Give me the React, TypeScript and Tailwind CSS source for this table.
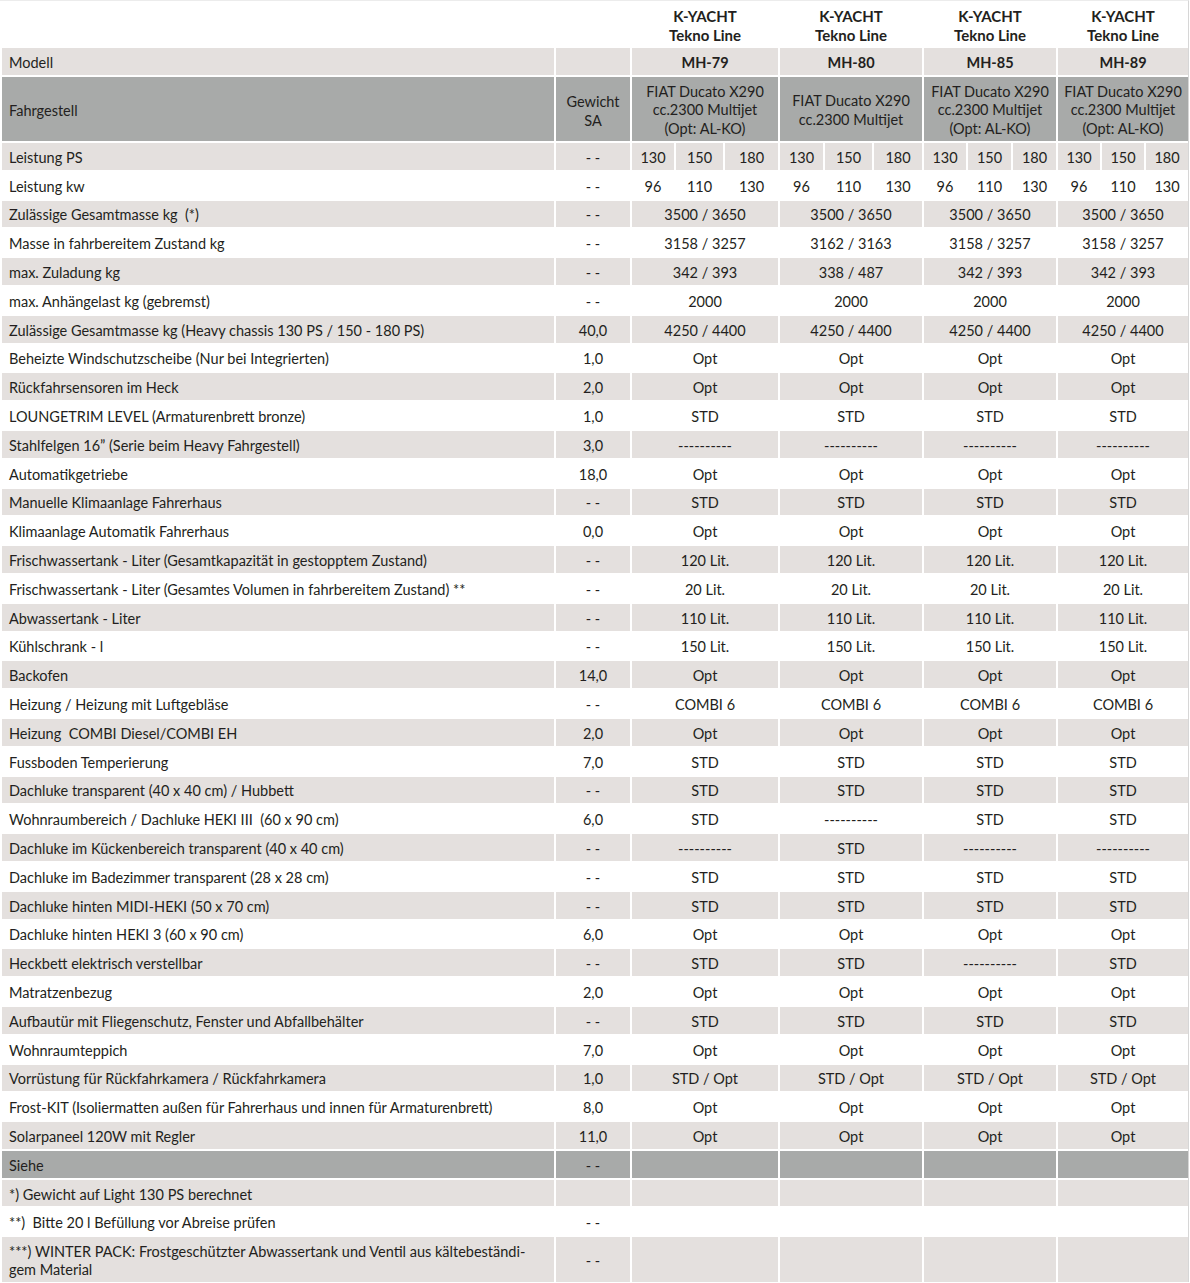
import React from "react";

type Row = { label: string; sa: string; vals: string[]; tone: "light" | "white" };

const raw: [string, string, string[]][] = [
  ["Zulässige Gesamtmasse kg  (*)", "- -", ["3500 / 3650", "3500 / 3650", "3500 / 3650", "3500 / 3650"]],
  ["Masse in fahrbereitem Zustand kg", "- -", ["3158 / 3257", "3162 / 3163", "3158 / 3257", "3158 / 3257"]],
  ["max. Zuladung kg", "- -", ["342 / 393", "338 / 487", "342 / 393", "342 / 393"]],
  ["max. Anhängelast kg (gebremst)", "- -", ["2000", "2000", "2000", "2000"]],
  ["Zulässige Gesamtmasse kg (Heavy chassis 130 PS / 150 - 180 PS)", "40,0", ["4250 / 4400", "4250 / 4400", "4250 / 4400", "4250 / 4400"]],
  ["Beheizte Windschutzscheibe (Nur bei Integrierten)", "1,0", ["Opt", "Opt", "Opt", "Opt"]],
  ["Rückfahrsensoren im Heck", "2,0", ["Opt", "Opt", "Opt", "Opt"]],
  ["LOUNGETRIM LEVEL (Armaturenbrett bronze)", "1,0", ["STD", "STD", "STD", "STD"]],
  ["Stahlfelgen 16” (Serie beim Heavy Fahrgestell)", "3,0", ["----------", "----------", "----------", "----------"]],
  ["Automatikgetriebe", "18,0", ["Opt", "Opt", "Opt", "Opt"]],
  ["Manuelle Klimaanlage Fahrerhaus", "- -", ["STD", "STD", "STD", "STD"]],
  ["Klimaanlage Automatik Fahrerhaus", "0,0", ["Opt", "Opt", "Opt", "Opt"]],
  ["Frischwassertank - Liter (Gesamtkapazität in gestopptem Zustand)", "- -", ["120 Lit.", "120 Lit.", "120 Lit.", "120 Lit."]],
  ["Frischwassertank - Liter (Gesamtes Volumen in fahrbereitem Zustand) **", "- -", ["20 Lit.", "20 Lit.", "20 Lit.", "20 Lit."]],
  ["Abwassertank - Liter", "- -", ["110 Lit.", "110 Lit.", "110 Lit.", "110 Lit."]],
  ["Kühlschrank - l", "- -", ["150 Lit.", "150 Lit.", "150 Lit.", "150 Lit."]],
  ["Backofen", "14,0", ["Opt", "Opt", "Opt", "Opt"]],
  ["Heizung / Heizung mit Luftgebläse", "- -", ["COMBI 6", "COMBI 6", "COMBI 6", "COMBI 6"]],
  ["Heizung  COMBI Diesel/COMBI EH", "2,0", ["Opt", "Opt", "Opt", "Opt"]],
  ["Fussboden Temperierung", "7,0", ["STD", "STD", "STD", "STD"]],
  ["Dachluke transparent (40 x 40 cm) / Hubbett", "- -", ["STD", "STD", "STD", "STD"]],
  ["Wohnraumbereich / Dachluke HEKI III  (60 x 90 cm)", "6,0", ["STD", "----------", "STD", "STD"]],
  ["Dachluke im Kückenbereich transparent (40 x 40 cm)", "- -", ["----------", "STD", "----------", "----------"]],
  ["Dachluke im Badezimmer transparent (28 x 28 cm)", "- -", ["STD", "STD", "STD", "STD"]],
  ["Dachluke hinten MIDI-HEKI (50 x 70 cm)", "- -", ["STD", "STD", "STD", "STD"]],
  ["Dachluke hinten HEKI 3 (60 x 90 cm)", "6,0", ["Opt", "Opt", "Opt", "Opt"]],
  ["Heckbett elektrisch verstellbar", "- -", ["STD", "STD", "----------", "STD"]],
  ["Matratzenbezug", "2,0", ["Opt", "Opt", "Opt", "Opt"]],
  ["Aufbautür mit Fliegenschutz, Fenster und Abfallbehälter", "- -", ["STD", "STD", "STD", "STD"]],
  ["Wohnraumteppich", "7,0", ["Opt", "Opt", "Opt", "Opt"]],
  ["Vorrüstung für Rückfahrkamera / Rückfahrkamera", "1,0", ["STD / Opt", "STD / Opt", "STD / Opt", "STD / Opt"]],
  ["Frost-KIT (Isoliermatten außen für Fahrerhaus und innen für Armaturenbrett)", "8,0", ["Opt", "Opt", "Opt", "Opt"]],
  ["Solarpaneel 120W mit Regler", "11,0", ["Opt", "Opt", "Opt", "Opt"]],
];

const rows: Row[] = raw.map(([label, sa, vals], i) => ({
  label,
  sa,
  vals,
  tone: i % 2 === 0 ? "light" : "white",
}));

const GRID = "grid grid-cols-[552px_74px_146px_142px_132px_130px] gap-x-[2px]";
const LIGHT = "bg-[#e4e0de]";
const GRAY = "bg-[#a8aaa9]";

const models = ["MH-79", "MH-80", "MH-85", "MH-89"];
const subCols = [
  "grid-cols-[42px_47px_53px]",
  "grid-cols-[43px_47px_48px]",
  "grid-cols-[42px_43px_43px]",
  "grid-cols-[42px_42px_42px]",
];

function Cell({ className = "", children }: { className?: string; children?: React.ReactNode }) {
  return <div className={`flex items-center justify-center pt-[3px] ${className}`}>{children}</div>;
}

function Label({ className = "", children }: { className?: string; children?: React.ReactNode }) {
  return <div className={`flex items-center pl-[7px] pt-[3px] whitespace-pre ${className}`}>{children}</div>;
}

export default function App() {
  return (
    <div
      className="w-[1190px] h-[1283px] bg-white text-[#231f20] overflow-hidden"
      style={{ fontFamily: "Lato, 'Open Sans', sans-serif" }}
    >
      <div className="relative pl-[2px] w-[1189px] border-t border-[#ececec] border-r border-r-[#d6d6d6] text-[14.5px] leading-[18px]">
        {/* Title row */}
        <div className={`${GRID} h-[47px]`}>
          <div />
          <div />
          {models.map((m) => (
            <div key={m} className="flex flex-col items-center justify-center font-bold text-[15px] leading-[19px] pt-[2px]">
              <span>K-YACHT</span>
              <span>Tekno Line</span>
            </div>
          ))}
        </div>
        <div className="flex flex-col gap-y-[2px]">
          {/* Modell */}
          <div className={`${GRID} h-[27px]`}>
            <Label className={LIGHT}>Modell</Label>
            <div className={LIGHT} />
            {models.map((m) => (
              <Cell key={m} className={`${LIGHT} font-bold`}>
                {m}
              </Cell>
            ))}
          </div>
          {/* Fahrgestell */}
          <div className={`${GRID} h-[64px]`}>
            <Label className={GRAY}>Fahrgestell</Label>
            <Cell className={`${GRAY} flex-col text-center leading-[19px]`}>
              <span>Gewicht</span>
              <span>SA</span>
            </Cell>
            {models.map((m, i) => (
              <Cell key={m} className={`${GRAY} flex-col text-center leading-[18.5px]`}>
                <span>FIAT Ducato X290</span>
                <span>cc.2300 Multijet</span>
                {i !== 1 && <span>(Opt: AL-KO)</span>}
              </Cell>
            ))}
          </div>
          {/* Leistung PS */}
          <div className={`${GRID} h-[26.8px]`}>
            <Label className={LIGHT}>Leistung PS</Label>
            <Cell className={LIGHT}>- -</Cell>
            {subCols.map((sc, i) => (
              <div key={i} className={`grid ${sc} gap-x-[2px]`}>
                <Cell className={LIGHT}>130</Cell>
                <Cell className={LIGHT}>150</Cell>
                <Cell className={LIGHT}>180</Cell>
              </div>
            ))}
          </div>
          {/* Leistung kw */}
          <div className={`${GRID} h-[26.8px]`}>
            <Label>Leistung kw</Label>
            <Cell>- -</Cell>
            {subCols.map((sc, i) => (
              <div key={i} className={`grid ${sc} gap-x-[2px]`}>
                <Cell>96</Cell>
                <Cell>110</Cell>
                <Cell>130</Cell>
              </div>
            ))}
          </div>
          {rows.map((r) => {
            const bg = r.tone === "light" ? LIGHT : "";
            return (
              <div key={r.label} className={`${GRID} h-[26.8px]`}>
                <Label className={bg}>{r.label}</Label>
                <Cell className={bg}>{r.sa}</Cell>
                {r.vals.map((v, i) => (
                  <Cell key={i} className={bg}>
                    {v}
                  </Cell>
                ))}
              </div>
            );
          })}
          {/* Siehe */}
          <div className={`${GRID} h-[26.8px]`}>
            <Label className={GRAY}>Siehe</Label>
            <Cell className={GRAY}>- -</Cell>
            {models.map((m) => (
              <div key={m} className={GRAY} />
            ))}
          </div>
          <div className={`${GRID} h-[26.8px]`}>
            <Label className={LIGHT}>*) Gewicht auf Light 130 PS berechnet</Label>
            <div className={LIGHT} />
            {models.map((m) => (
              <div key={m} className={LIGHT} />
            ))}
          </div>
          <div className={`${GRID} h-[26.8px]`}>
            <Label>**)  Bitte 20 l Befüllung vor Abreise prüfen</Label>
            <Cell>- -</Cell>
            {models.map((m) => (
              <div key={m} />
            ))}
          </div>
          <div className={`${GRID} h-[45px]`}>
            <div className={`${LIGHT} flex items-center pl-[7px] pr-[20px] pt-[3px]`}>
              ***) WINTER PACK: Frostgeschützter Abwassertank und Ventil aus kältebeständi-
              <br />
              gem Material
            </div>
            <Cell className={LIGHT}>- -</Cell>
            {models.map((m) => (
              <div key={m} className={LIGHT} />
            ))}
          </div>
        </div>
      </div>
    </div>
  );
}
